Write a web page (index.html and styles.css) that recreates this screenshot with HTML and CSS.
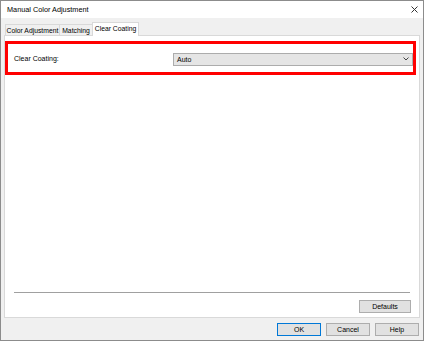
FILE: index.html
```html
<!DOCTYPE html>
<html lang="en">
<head>
	<meta charset="UTF-8">
	<meta name="viewport" content="width=device-width, initial-scale=1.0">
	<title>Manual Color Adjustment</title>
	<link rel="stylesheet" href="styles.css">
</head>
<body>
	<div id="mca-window">
		<div id="mca-title">
			<span>Manual Color Adjustment</span>
			<svg id="mca-x" width="7" height="7" viewBox="0 0 7 7"><path d="M0.5 0.5L6.5 6.5M6.5 0.5L0.5 6.5" stroke="#333" stroke-width="1"/></svg>
		</div>
		<div id="mca-body">
			<ul id="mca-tabs">
				<li class="mca-tab t1">Color Adjustment</li>
				<li class="mca-tab t2">Matching</li>
				<li class="mca-tab t3 selected">Clear Coating</li>
			</ul>
			<div id="mca-panel">
				<div id="mca-row">
					<span>Clear Coating:</span>
					<div class="mca-select">
						<span>Auto</span>
						<svg width="6" height="4" viewBox="0 0 6 4"><path d="M0.5 0.5L3 3L5.5 0.5" fill="none" stroke="#444" stroke-width="1"/></svg>
					</div>
				</div>
				<div class="mca-spacer"></div>
				<hr id="mca-sep">
				<div class="mca-btn" id="mca-defaults">Defaults</div>
			</div>
			<div id="mca-footer">
				<div class="mca-btn focus">OK</div>
				<div class="mca-btn">Cancel</div>
				<div class="mca-btn">Help</div>
			</div>
		</div>
	</div>
</body>
</html>
```
FILE: styles.css
```css
html, body {
  margin: 0;
  padding: 0;
}

#mca-window {
  width: 424px;
  height: 341px;
  box-sizing: border-box;
  border: 1px solid #8c8c8c;
  background: #f0f0f0;
  display: flex;
  flex-direction: column;
  font-family: "Liberation Sans", Arial, sans-serif;
  font-size: 7px;
  color: #000;
}

#mca-title {
  height: 17px;
  background: #fff;
  display: flex;
  align-items: center;
  justify-content: space-between;
  padding: 0 5px 0 6px;
  font-size: 7.3px;
}

#mca-body {
  flex: 1;
  display: flex;
  flex-direction: column;
  padding: 0 3px;
}

#mca-tabs {
  margin: 0;
  padding: 0 0 0 1px;
  list-style: none;
  height: 17px;
  display: flex;
  align-items: flex-end;
  font-size: 6.8px;
}

.mca-tab {
  height: 11px;
  box-sizing: border-box;
  border: 1px solid #d9d9d9;
  border-bottom: none;
  border-right: none;
  display: flex;
  align-items: center;
  justify-content: center;
  background: #f0f0f0;
}
.mca-tab.t1 { width: 54px; }
.mca-tab.t2 { width: 33px; }
.mca-tab.t3 { width: 47px; }
.mca-tab.selected {
  height: 14px;
  margin-bottom: -1px;
  background: #fff;
  border-right: 1px solid #d9d9d9;
  padding-bottom: 2px;
  position: relative;
  z-index: 1;
}

#mca-panel {
  height: 283px;
  box-sizing: border-box;
  background: #fff;
  border: 1px solid #d9d9d9;
  display: flex;
  flex-direction: column;
}

#mca-row {
  height: 34px;
  box-sizing: border-box;
  margin: 5px 3px 0 0;
  border: 3px solid #f00;
  padding: 0 0 0 6px;
  display: flex;
  align-items: center;
  justify-content: space-between;
}

.mca-select {
  width: 240px;
  height: 13px;
  margin-top: 2px;
  box-sizing: border-box;
  background: #e5e5e5;
  border: 1px solid #acacac;
  display: flex;
  align-items: center;
  justify-content: space-between;
  padding: 0 3px 0 3px;
}

.mca-spacer {
  flex: 1;
}

#mca-sep {
  margin: 0 9px;
  border: none;
  border-top: 1px solid #a0a0a0;
  height: 0;
}

.mca-btn {
  height: 13px;
  box-sizing: border-box;
  background: #e1e1e1;
  border: 1px solid #adadad;
  display: flex;
  align-items: center;
  justify-content: center;
}
.mca-btn.focus {
  border-color: #0078d7;
}

#mca-defaults {
  width: 52px;
  align-self: flex-end;
  margin: 7px 8px 4px 0;
}

#mca-footer {
  flex: 1;
  display: flex;
  justify-content: flex-end;
  align-items: flex-start;
  gap: 5px;
  padding: 5px 1px 0 0;
}
#mca-footer .mca-btn {
  width: 44px;
}
```
